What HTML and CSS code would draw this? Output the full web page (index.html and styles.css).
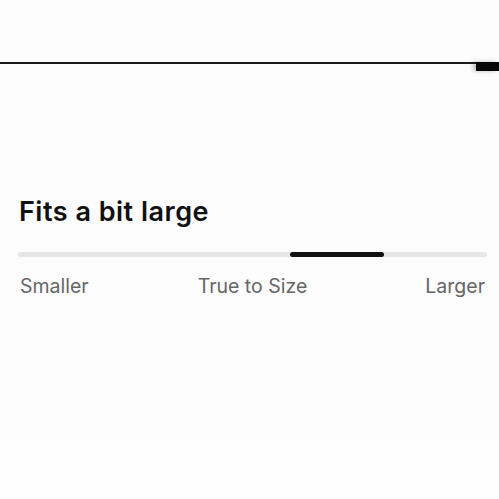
FILE: index.html
```html
<!DOCTYPE html>
<html lang="en">
<head>
    <meta charset="UTF-8">
    <meta name="viewport" content="width=device-width, initial-scale=1.0">
    <title>Fit</title>
    <link rel="stylesheet" href="styles.css">
</head>
<body>
    <div class="page">
        <div class="top-rule">
            <div class="rule-line"></div>
            <div class="rule-tab"></div>
        </div>

        <div class="fit">
            <h2 class="fit-title">Fits a bit large</h2>
            <div class="fit-track">
                <div class="fit-marker"></div>
            </div>
            <div class="fit-labels">
                <span>Smaller</span>
                <span>True to Size</span>
                <span class="end">Larger</span>
            </div>
        </div>
    </div>
</body>
</html>
```

FILE: styles.css
```css
body {
    margin: 0;
    background: #fefefe;
    font-family: Inter, "Noto Sans", sans-serif;
}

.page {
    height: 440px;
    background: #fcfcfc;
}

.top-rule {
    display: flex;
    align-items: flex-start;
    padding-top: 62px;
}

.rule-line {
    flex: 1;
    height: 2px;
    background: #1a1a1a;
}

.rule-tab {
    width: 23px;
    height: 9px;
    background: #050505;
    box-shadow: -3px 0 4px rgba(0, 0, 0, 0.25);
}

.fit {
    padding: 126px 12px 0 18px;
}

.fit-title {
    margin: 0 0 0 1px;
    font-size: 27px;
    font-weight: 600;
    letter-spacing: 0.5px;
    line-height: 30px;
    color: #111;
}

.fit-track {
    position: relative;
    margin-top: 25px;
    height: 5px;
    border-radius: 3px;
    background: #e6e6e6;
}

.fit-marker {
    position: absolute;
    left: 272px;
    width: 94px;
    top: 0;
    height: 5px;
    border-radius: 3px;
    background: #111;
}

.fit-labels {
    display: grid;
    grid-template-columns: 1fr auto 1fr;
    margin-top: 17px;
    padding: 0 2px;
    font-size: 19.5px;
    color: #666;
}

.fit-labels .end {
    justify-self: end;
}
```
